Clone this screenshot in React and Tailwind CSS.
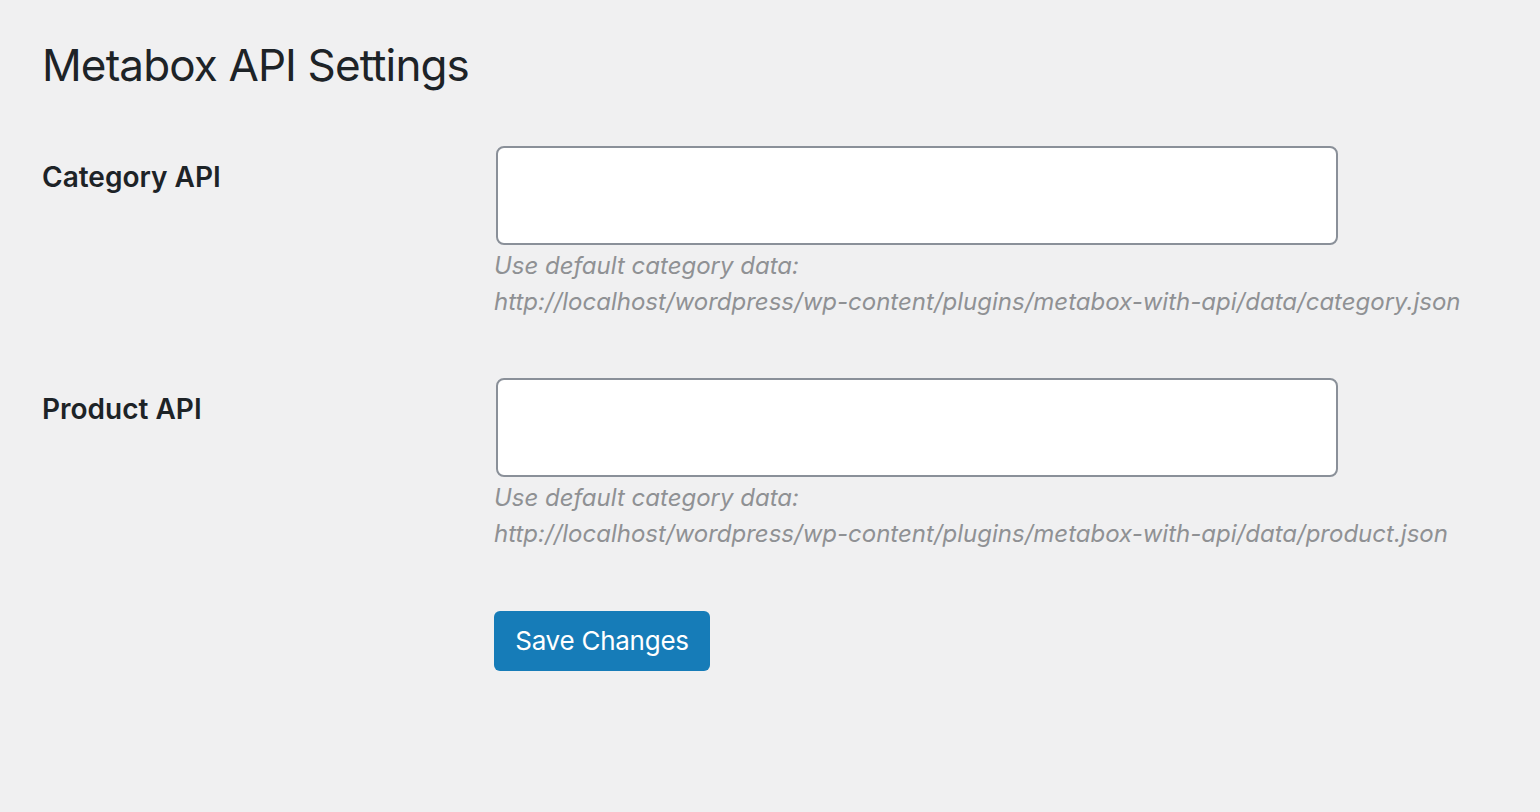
import React from 'react'

const fields = [
  {
    id: 'category_api',
    label: 'Category API',
    url: 'http://localhost/wordpress/wp-content/plugins/metabox-with-api/data/category.json',
  },
  {
    id: 'product_api',
    label: 'Product API',
    url: 'http://localhost/wordpress/wp-content/plugins/metabox-with-api/data/product.json',
  },
]

function FieldRow({ id, label, url }) {
  return (
    <div className="flex">
      <div className="w-[434px] shrink-0 pt-[43px]">
        <label htmlFor={id} className="text-[28px] leading-[1.3] font-semibold text-[#1d2327]">
          {label}
        </label>
      </div>
      <div className="px-[20px] pt-[30px] pb-[28px]">
        <input
          id={id}
          type="text"
          className="block w-[842px] h-[99px] bg-white border-2 border-[#8a9099] rounded-[8px] px-4 text-[28px] outline-none"
        />
        <p className="mt-[3px] text-[24px] leading-[36px] italic text-[#8f9194] -ml-[2px] whitespace-nowrap">
          Use default category data:
          <br />
          {url}
        </p>
      </div>
    </div>
  )
}

export default function App() {
  return (
    <div className="min-h-[812px] bg-[#f0f0f1] pl-[42px] pt-[35px] font-['Inter','Liberation_Sans',sans-serif]">
      <h1 className="text-[44px] leading-[60px] tracking-[-0.02em] font-normal text-[#1d2327]">
        Metabox API Settings
      </h1>

      <form className="mt-[21px]" onSubmit={(e) => e.preventDefault()}>
        {fields.map((f) => (
          <FieldRow key={f.id} {...f} />
        ))}

        <div className="pl-[452px] pt-[31px]">
          <button
            type="submit"
            className="w-[216px] h-[60px] rounded-[6px] bg-[#167cb8] text-white text-[26px] tracking-[-0.01em] leading-none"
          >
            Save Changes
          </button>
        </div>
      </form>
    </div>
  )
}
